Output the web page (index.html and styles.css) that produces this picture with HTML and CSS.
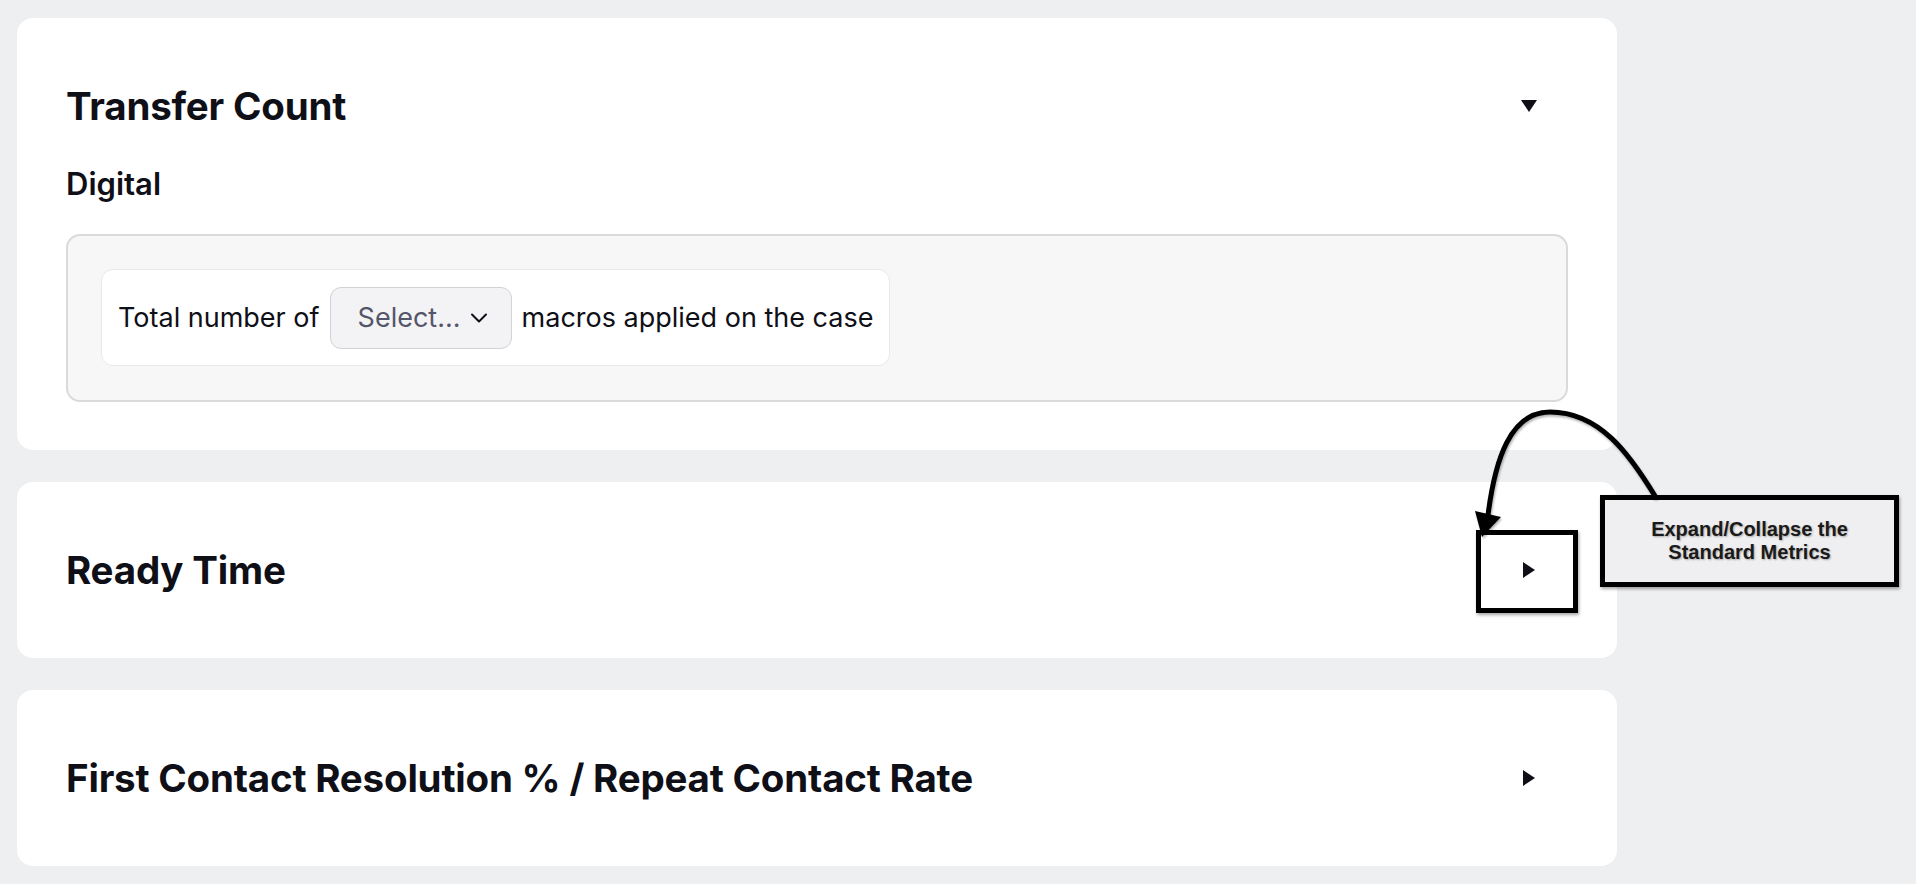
FILE: index.html
```html
<!DOCTYPE html>
<html lang="en">
<head>
<meta charset="utf-8">
<title>Standard Metrics</title>
<link rel="stylesheet" href="styles.css">
</head>
<body>
<main class="page">
  <section class="card">
    <div class="card-header">
      <h2 class="card-title">Transfer Count</h2>
      <span class="toggle">
        <svg width="16" height="12" viewBox="0 0 16 12"><path d="M0 0 H16 L8 12 Z" fill="#0f0f17"/></svg>
      </span>
    </div>
    <h3 class="sub-title">Digital</h3>
    <div class="rule-box">
      <div class="rule-row">
        <span class="rule-text">Total number of</span>
        <span class="select">
          <span class="select-label">Select...</span>
          <svg class="select-chevron" width="18" height="12" viewBox="0 0 18 12"><path d="M2 2.5 L9 9.5 L16 2.5" fill="none" stroke="#0f0f17" stroke-width="2" stroke-linecap="round" stroke-linejoin="round"/></svg>
        </span>
        <span class="rule-text">macros applied on the case</span>
      </div>
    </div>
  </section>

  <section class="card">
    <div class="card-header">
      <h2 class="card-title">Ready Time</h2>
      <span class="toggle">
        <svg width="12" height="16" viewBox="0 0 12 16"><path d="M0 0 V16 L12 8 Z" fill="#0f0f17"/></svg>
      </span>
    </div>
  </section>

  <section class="card">
    <div class="card-header">
      <h2 class="card-title">First Contact Resolution % / Repeat Contact Rate</h2>
      <span class="toggle">
        <svg width="12" height="16" viewBox="0 0 12 16"><path d="M0 0 V16 L12 8 Z" fill="#0f0f17"/></svg>
      </span>
    </div>
  </section>
</main>

<div class="annot-highlight"></div>
<div class="annot-callout">Expand/Collapse the<br>Standard Metrics</div>
<svg class="annot-arrow" width="1916" height="884" viewBox="0 0 1916 884">
  <path d="M1655 496 C1630 455, 1600 412, 1550 412 C1510 412, 1495 460, 1488 515" fill="none" stroke="#000" stroke-width="5" stroke-linecap="round"/>
  <path d="M1482 537 L1475 511 L1501 517 Z" fill="#000"/>
</svg>
</body>
</html>
```

FILE: styles.css
```css
* { box-sizing: border-box; }

html, body {
  margin: 0;
  padding: 0;
  background: #eeeff1;
}

body {
  font-family: Inter, "Noto Sans", sans-serif;
  color: #0f0f17;
  width: 1916px;
  height: 884px;
  overflow: hidden;
  position: relative;
}

.page {
  padding: 18px 0 0 17px;
  display: flex;
  flex-direction: column;
  gap: 32px;
}

.card {
  width: 1600px;
  background: #ffffff;
  border-radius: 16px;
  padding: 48px 68px 48px 49px;
}

.card-header {
  height: 80px;
  display: flex;
  align-items: center;
  justify-content: space-between;
}

.card-title {
  margin: 0;
  font-size: 38.5px;
  font-weight: 700;
  letter-spacing: -0.2px;
  color: #0f0f17;
}

.toggle {
  width: 40px;
  height: 40px;
  display: flex;
  align-items: center;
  justify-content: center;
}

.sub-title {
  margin: 20px 0 32px;
  font-size: 31px;
  line-height: 36px;
  font-weight: 600;
}

.rule-box {
  width: 1502px;
  background: #f7f7f8;
  border: 2px solid #dadadd;
  border-radius: 14px;
  padding: 33px 33px 34px;
  display: flex;
}

.rule-row {
  height: 97px;
  background: #ffffff;
  border: 1px solid #e9e9ec;
  border-radius: 12px;
  padding: 0 16px;
  display: flex;
  align-items: center;
  gap: 10px;
}

.rule-text {
  font-size: 27px;
  color: #0f0f17;
  white-space: nowrap;
}

.select {
  width: 182px;
  height: 62px;
  background: #f3f3f5;
  border: 1.5px solid #d2d2d7;
  border-radius: 11px;
  display: flex;
  align-items: center;
  padding: 0 0 0 27px;
  gap: 9px;
}

.select-label {
  font-size: 27px;
  color: #55556a;
  white-space: nowrap;
}

.annot-highlight {
  position: absolute;
  left: 1476px;
  top: 530px;
  width: 102px;
  height: 83px;
  border: 5px solid #000;
  box-shadow: 1px 2px 3px rgba(0, 0, 0, 0.35);
}

.annot-callout {
  position: absolute;
  left: 1600px;
  top: 495px;
  width: 299px;
  height: 92px;
  border: 5px solid #000;
  background: #efeff1;
  box-shadow: 1px 2px 3px rgba(0, 0, 0, 0.35);
  display: flex;
  align-items: center;
  justify-content: center;
  text-align: center;
  font-family: "Liberation Sans", Arial, sans-serif;
  font-weight: 700;
  font-size: 20px;
  line-height: 23px;
  color: #1a1a1a;
  text-shadow: 1px 1px 2px rgba(0, 0, 0, 0.3);
}

.annot-arrow {
  position: absolute;
  left: 0;
  top: 0;
  pointer-events: none;
  filter: drop-shadow(1px 2px 1px rgba(0, 0, 0, 0.3));
}
```
